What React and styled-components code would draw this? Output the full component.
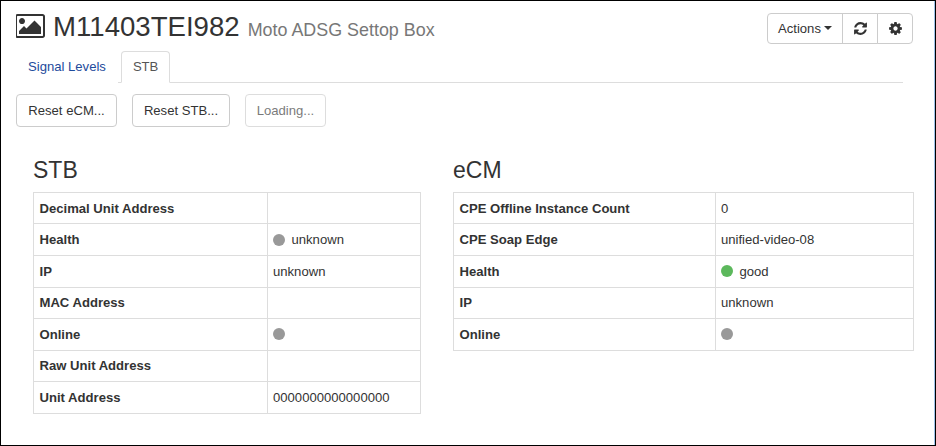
import React from 'react';
import styled, { createGlobalStyle } from 'styled-components';

const GlobalStyle = createGlobalStyle`
  html, body {
    margin: 0;
    padding: 0;
    background: #fff;
  }
  * {
    box-sizing: border-box;
  }
`;

const Page = styled.div`
  width: 936px;
  height: 446px;
  overflow: hidden;
  background: #fff;
  border: 1px solid #000;
  box-shadow: inset -1px 0 0 #9fc3ea;
  padding: 12px 0 0 15px;
  font-family: "Liberation Sans", Arial, sans-serif;
  font-size: 13.1px;
  color: #333;
`;

const Header = styled.div`
  display: flex;
  align-items: center;
  justify-content: space-between;
  width: 897px;
  height: 30px;
`;

const Title = styled.h1`
  display: flex;
  align-items: baseline;
  margin: 0;
  font-size: 27.6px;
  font-weight: 400;
  line-height: 30px;
  white-space: nowrap;
  svg {
    width: 30px;
    height: 28px;
    margin: 0 7px 4px 0;
    align-self: center;
    fill: #333;
  }
`;

const Subtitle = styled.small`
  margin-left: 8px;
  font-size: 17.9px;
  color: #777;
`;

const ButtonGroup = styled.div`
  display: flex;
`;

const GroupButton = styled.button`
  display: flex;
  align-items: center;
  justify-content: center;
  gap: 3px;
  height: 31px;
  width: ${(p) => p.$width}px;
  margin-left: ${(p) => (p.$first ? 0 : -1)}px;
  padding: 0;
  background: #fff;
  border: 1px solid #ccc;
  border-radius: ${(p) => p.$radius};
  font: inherit;
  color: #333;
  svg {
    width: 15px;
    height: 15px;
    fill: #333;
  }
`;

const Caret = styled.span`
  width: 0;
  height: 0;
  border-top: 4px solid #333;
  border-left: 4px solid transparent;
  border-right: 4px solid transparent;
`;

const Tabs = styled.ul`
  display: flex;
  list-style: none;
  width: 887px;
  height: 32px;
  margin: 8px 0 0;
  padding: 0;
  border-bottom: 1px solid #ddd;
`;

const Tab = styled.li`
  height: 32px;
  padding: 5px 11px 0;
  margin-right: 3px;
  line-height: 20px;
  color: ${(p) => (p.$active ? '#555' : '#1e4b9c')};
  background: #fff;
  border: 1px solid ${(p) => (p.$active ? '#ddd' : 'transparent')};
  border-bottom-color: ${(p) => (p.$active ? '#fff' : 'transparent')};
  border-radius: 4px 4px 0 0;
`;

const Toolbar = styled.div`
  display: flex;
  gap: 15px;
  margin-top: 11px;
`;

const ActionButton = styled.button`
  height: 33px;
  width: ${(p) => p.$width}px;
  padding: 0;
  background: #fff;
  border: 1px solid #ccc;
  border-radius: 4px;
  font: inherit;
  color: #333;
  opacity: ${(p) => (p.disabled ? 0.65 : 1)};
`;

const Columns = styled.div`
  display: flex;
  gap: 32px;
  margin: 30px 0 0 17px;
`;

const Section = styled.section`
  width: ${(p) => p.$width}px;
`;

const SectionTitle = styled.h3`
  margin: 0 0 8.9px;
  font-size: 23px;
  font-weight: 400;
  line-height: 26px;
`;

const Table = styled.div`
  display: grid;
  grid-template-columns: ${(p) => p.$label}px 1fr;
  grid-auto-rows: 31.57px;
  border-top: 1px solid #ddd;
  border-left: 1px solid #ddd;
`;

const Cell = styled.div`
  display: flex;
  align-items: center;
  padding: 0 5px 0 ${(p) => (p.$label ? 5.5 : 5)}px;
  border-right: 1px solid #ddd;
  border-bottom: 1px solid #ddd;
  font-weight: ${(p) => (p.$label ? 700 : 400)};
  white-space: nowrap;
`;

const Dot = styled.span`
  width: 12px;
  height: 12px;
  margin-right: ${(p) => (p.$alone ? 0 : 6.5)}px;
  border-radius: 50%;
  background: ${(p) => (p.$good ? '#5cb85c' : '#999')};
`;

const PictureIcon = () => (
  <svg viewBox="0 0 1920 1792">
    <path d="M576 576q0 80-56 136t-136 56-136-56-56-136 56-136 136-56 136 56 56 136zm1024 384v448h-1408v-192l320-320 160 160 512-512zm96-704h-1600q-13 0-22.5 9.5t-9.5 22.5v1216q0 13 9.5 22.5t22.5 9.5h1600q13 0 22.5-9.5t9.5-22.5v-1216q0-13-9.5-22.5t-22.5-9.5zm160 32v1216q0 66-47 113t-113 47h-1600q-66 0-113-47t-47-113v-1216q0-66 47-113t113-47h1600q66 0 113 47t47 113z" />
  </svg>
);

const RefreshIcon = () => (
  <svg viewBox="0 0 1792 1792">
    <path d="M1639 1056q0 5-1 7-64 268-268 434.5t-478 166.5q-146 0-282.5-55t-243.5-157l-129 129q-19 19-45 19t-45-19-19-45v-448q0-26 19-45t45-19h448q26 0 45 19t19 45-19 45l-137 137q71 66 161 102t187 36q134 0 250-65t186-179q11-17 53-117 8-23 30-23h192q13 0 22.5 9.5t9.5 22.5zm25-800v448q0 26-19 45t-45 19h-448q-26 0-45-19t-19-45 19-45l138-138q-148-137-349-137-134 0-250 65t-186 179q-11 17-53 117-8 23-30 23h-199q-13 0-22.5-9.5t-9.5-22.5v-7q65-268 270-434.5t480-166.5q146 0 284 55.5t245 156.5l130-129q19-19 45-19t45 19 19 45z" />
  </svg>
);

const CogIcon = () => (
  <svg viewBox="0 0 1792 1792">
    <path d="M1152 896q0-106-75-181t-181-75-181 75-75 181 75 181 181 75 181-75 75-181zm512-109v222q0 12-8 23t-20 13l-185 28q-19 54-39 91 35 50 107 138 10 12 10 25t-9 23q-27 37-99 108t-94 71q-12 0-26-9l-138-108q-44 23-91 38-16 136-29 186-7 28-36 28h-222q-14 0-24.5-8.5t-11.5-21.5l-28-184q-49-16-90-37l-141 107q-10 9-25 9-14 0-25-11-126-114-165-168-7-10-7-23 0-12 8-23 15-21 51-66.5t54-70.5q-27-50-41-99l-183-27q-13-2-21-12.5t-8-23.5v-222q0-12 8-23t19-13l186-28q14-46 39-92-40-57-107-138-10-12-10-24 0-10 9-23 26-36 98.5-107.5t94.5-71.5q13 0 26 10l138 107q44-23 91-38 16-136 29-186 7-28 36-28h222q14 0 24.5 8.5t11.5 21.5l28 184q49 16 90 37l142-107q9-9 24-9 13 0 25 10 129 119 165 170 7 8 7 22 0 12-8 23-15 21-51 66.5t-54 70.5q26 50 41 98l183 28q13 2 21 12.5t8 23.5z" />
  </svg>
);

const stbRows = [
  ['Decimal Unit Address', ''],
  ['Health', { dot: 'unknown', text: 'unknown' }],
  ['IP', 'unknown'],
  ['MAC Address', ''],
  ['Online', { dot: 'unknown' }],
  ['Raw Unit Address', ''],
  ['Unit Address', '0000000000000000'],
];

const ecmRows = [
  ['CPE Offline Instance Count', '0'],
  ['CPE Soap Edge', 'unified-video-08'],
  ['Health', { dot: 'good', text: 'good' }],
  ['IP', 'unknown'],
  ['Online', { dot: 'unknown' }],
];

const Value = ({ value }) => {
  if (value && value.dot) {
    return (
      <>
        <Dot $good={value.dot === 'good'} $alone={!value.text} />
        {value.text}
      </>
    );
  }
  return value;
};

const InfoTable = ({ rows, label }) => (
  <Table $label={label}>
    {rows.map(([name, value]) => (
      <React.Fragment key={name}>
        <Cell $label>{name}</Cell>
        <Cell>
          <Value value={value} />
        </Cell>
      </React.Fragment>
    ))}
  </Table>
);

const App = () => (
  <Page>
    <GlobalStyle />
    <Header>
      <Title>
        <PictureIcon />
        M11403TEI982
        <Subtitle>Moto ADSG Settop Box</Subtitle>
      </Title>
      <ButtonGroup>
        <GroupButton $first $width={76} $radius="4px 0 0 4px">
          Actions <Caret />
        </GroupButton>
        <GroupButton $width={36} $radius="0">
          <RefreshIcon />
        </GroupButton>
        <GroupButton $width={36} $radius="0 4px 4px 0">
          <CogIcon />
        </GroupButton>
      </ButtonGroup>
    </Header>
    <Tabs>
      <Tab>Signal Levels</Tab>
      <Tab $active>STB</Tab>
    </Tabs>
    <Toolbar>
      <ActionButton $width={101}>Reset eCM...</ActionButton>
      <ActionButton $width={98}>Reset STB...</ActionButton>
      <ActionButton $width={81} disabled>Loading...</ActionButton>
    </Toolbar>
    <Columns>
      <Section $width={388}>
        <SectionTitle>STB</SectionTitle>
        <InfoTable rows={stbRows} label={234} />
      </Section>
      <Section $width={461}>
        <SectionTitle>eCM</SectionTitle>
        <InfoTable rows={ecmRows} label={262} />
      </Section>
    </Columns>
  </Page>
);

export default App;
